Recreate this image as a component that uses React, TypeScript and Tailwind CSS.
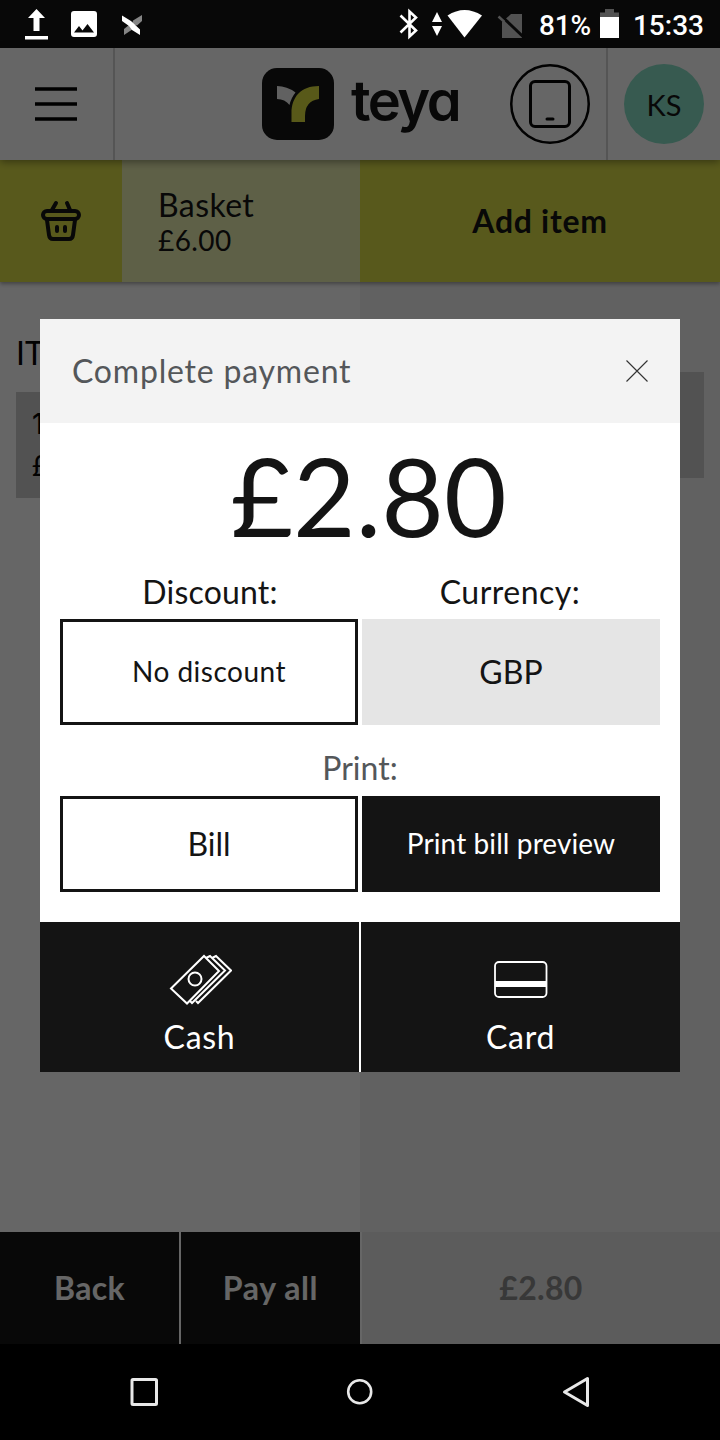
import type { ReactNode } from 'react'

function StatusBar() {
    return (
        <div className="flex h-12 items-center bg-[#080808] font-['Roboto',sans-serif] text-[28px] font-medium text-white">
            <svg className="h-12 w-[160px] shrink-0" viewBox="0 0 160 48" fill="#fff">
                <path d="M36.500 9l8.500 9h-5.500v13h-6V18H28zM25 36h23v3.500H25z" />
                <path fillRule="evenodd" d="M74 11h20a3 3 0 0 1 3 3v20a3 3 0 0 1-3 3H74a3 3 0 0 1-3-3V14a3 3 0 0 1 3-3zM74 32.500h20L87.500 24l-5 6.500-3.500-4.500z" />
                <path fill="#858585" d="M142 15v6l-5 4.500-5-1 1-4zM124 35v-6l5-4 4 1v3z" />
                <path d="M122 15.500l9 5.500 9 8.500v5.500l-8-5-3-4-7-5z" />
            </svg>
            <svg className="ml-auto h-12 w-[140px] shrink-0" viewBox="390 0 140 48" fill="none">
                <path d="M400.500 15.500l15.500 15-6.500 6v-25l6.500 6-15.500 15" stroke="#fff" strokeWidth="2.600" />
                <path d="M437 12l5 10h-10zM437 36l-5-10h10z" fill="#fff" />
                <path d="M447.500 15.500q17-11 34.500 0L464.500 37.500z" fill="#fff" />
                <path d="M511 14h11v24h-20V22z" fill="#525252" />
                <path d="M503 17.500l21 20" stroke="#080808" strokeWidth="3" />
                <path d="M498.500 16.500l6 5.500" stroke="#525252" strokeWidth="2.500" />
            </svg>
            <span className="ml-[9px] w-[53px] pt-1 whitespace-nowrap tracking-[-0.2px]">81%</span>
            <svg className="ml-[8px] h-12 w-[20px] shrink-0" viewBox="600 0 20 48">
                <path d="M605 9h9v3.500h5V18h-19v-5.500h5z" fill="#525252" />
                <path d="M600 17h19v21h-19z" fill="#fff" />
            </svg>
            <span className="mr-[16px] ml-[13px] pt-1 whitespace-nowrap">15:33</span>
        </div>
    )
}

function Header() {
    return (
        <header className="relative z-20 flex h-28 bg-white shadow-[0_2px_8px_rgba(0,0,0,0.4)]">
            <div className="flex w-[115px] items-center border-r-2 border-[#d4d4d4] pl-[35px]">
                <svg className="h-[34px] w-[42px]" viewBox="0 0 42 34">
                    <path d="M0 2h42M0 17h42M0 32h42" stroke="#000" strokeWidth="3.500" />
                </svg>
            </div>
            <div className="flex flex-1 items-center pl-[147px]">
                <svg className="h-[72px] w-[72px] shrink-0" viewBox="0 0 72 72">
                    <rect width="72" height="72" rx="15" fill="#141414" />
                    <path d="M15 18q10 0 18.500 6.500Q29 30 27.500 37 23 31 15 31z" fill="#f3f3f3" />
                    <path d="M57 18v13Q43 33 43 48v6H29.500V45C29.500 29 39 18 57 18z" fill="#dddf3f" />
                </svg>
                <span className="-mt-1.5 ml-[17px] font-['Inter',sans-serif] text-[56px] leading-none font-semibold tracking-[-2.5px] text-[#141414] [font-feature-settings:'cv11']">teya</span>
            </div>
            <div className="flex w-[98px] shrink-0 items-center border-r-2 border-[#d4d4d4]">
                <svg className="h-20 w-20" viewBox="0 0 80 80" fill="none" stroke="#050505">
                    <circle cx="40" cy="40" r="38.750" strokeWidth="2.500" />
                    <rect x="20.500" y="17.500" width="39" height="45" rx="4.500" strokeWidth="3" />
                    <path d="M37 55h6" strokeWidth="3" strokeLinecap="round" />
                </svg>
            </div>
            <div className="flex w-28 shrink-0 items-center justify-center">
                <div className="flex h-20 w-20 items-center justify-center rounded-full bg-[#8ae1c8] pt-0.5 text-[29px] text-[#141414]">KS</div>
            </div>
        </header>
    )
}

function BasketBar() {
    return (
        <div className="relative z-10 flex h-[122px] text-[#141414] shadow-[0_2px_4px_rgba(0,0,0,0.35)]">
            <div className="flex w-[122px] items-center justify-center bg-[#dddf48]">
                <svg className="h-[42px] w-[42px]" viewBox="0 0 42 42" fill="none" stroke="#141414" strokeWidth="4" strokeLinecap="round">
                    <rect x="3" y="11" width="36" height="8" rx="4" />
                    <path d="M7 20l2 15q.5 4 4 4h16q3.500 0 4-4l2-15M12 10l4-7M30 10l-3-7M17 27v4M25 27v4" />
                </svg>
            </div>
            <div className="flex w-[238px] flex-col justify-center bg-[#ebf0b2] pt-0.5 pl-9">
                <span className="text-[32px] leading-9 tracking-[0.4px]">Basket</span>
                <span className="text-[28px] leading-[34px] tracking-[0.4px]">£6.00</span>
            </div>
            <div className="flex flex-1 items-center justify-center bg-[#dddf48] text-[32px] font-bold tracking-[0.7px]">Add item</div>
        </div>
    )
}

function CashIcon() {
    return (
        <svg className="h-[52px] w-[64px]" viewBox="0 0 64 52" fill="none" stroke="#fff" strokeWidth="2">
            <path d="M3 35.500L36 3l15 15-32 32.500z" />
            <circle cx="27" cy="26" r="6.500" />
            <path d="M38 5l4-2 15 14.500L24 50l-2-2M44 5l4-2 15 14.500L30 50l-2-2" />
        </svg>
    )
}

function CardIcon() {
    return (
        <svg className="h-[52px] w-[54px]" viewBox="0 0 54 52" fill="none" stroke="#fff">
            <rect x="1" y="9" width="51.500" height="35" rx="4" strokeWidth="1.800" />
            <path d="M1 31h51.500" strokeWidth="6" />
        </svg>
    )
}

function PayButton({ label, children }: { label: string; children: ReactNode }) {
    return (
        <button className="flex flex-1 flex-col items-center bg-[#141414] pt-[31px] text-[32px] text-white">
            {children}
            <span className="mt-[12px] leading-10 tracking-[0.7px]">{label}</span>
        </button>
    )
}

function PaymentModal() {
    return (
        <div className="flex h-[753px] w-[640px] flex-col bg-white text-[#141414]">
            <div className="flex h-[104px] items-center justify-between bg-[#f3f3f3] px-8 text-[32px] text-[#54575a]">
                <span className="tracking-[0.8px]">Complete payment</span>
                <svg className="h-[22px] w-[22px]" viewBox="0 0 22 22" stroke="#333" strokeWidth="1.100">
                    <path d="M.5.5l21 21M21.500.5l-21 21" />
                </svg>
            </div>
            <div className="flex h-[150px] items-center justify-center pb-1.5 pl-[17px] text-[108px] leading-none">£2.80</div>
            <div className="grid grid-cols-2 gap-x-1 px-5 text-center text-[32px]">
                <span className="h-[46px] pl-0.5 leading-[38px] tracking-[0.2px]">Discount:</span>
                <span className="h-[46px] pr-0.5 leading-[38px] tracking-[0.5px]">Currency:</span>
                <button className="h-[106px] border-[3px] border-[#141414] pb-0.5 text-[28px] tracking-[0.5px]">No discount</button>
                <button className="h-[106px] bg-[#e5e5e5]">GBP</button>
            </div>
            <div className="mt-6 h-[47px] text-center text-[32px] leading-[38px] text-[#54575a]">Print:</div>
            <div className="grid grid-cols-2 gap-x-1 px-5 text-[32px]">
                <button className="h-24 border-[3px] border-[#141414]">Bill</button>
                <button className="h-24 bg-[#141414] pb-0.5 text-[28px] tracking-[0.1px] text-white">Print bill preview</button>
            </div>
            <div className="mt-auto flex h-[150px] gap-0.5">
                <PayButton label="Cash"><CashIcon /></PayButton>
                <PayButton label="Card"><CardIcon /></PayButton>
            </div>
        </div>
    )
}

function NavigationBar() {
    return (
        <nav className="flex h-24 items-center bg-black">
            <svg className="h-24 w-full" viewBox="0 0 720 96" fill="none" stroke="#e8e8e8" strokeWidth="3" strokeLinejoin="round">
                <rect x="132" y="35.500" width="24.500" height="25" rx="1" />
                <circle cx="359.700" cy="47.700" r="11.500" strokeWidth="2.600" />
                <path d="M564.500 48l23-13.500v27z" />
            </svg>
        </nav>
    )
}

export default function App() {
    return (
        <div className="h-[1440px] w-[720px] overflow-hidden bg-black font-['Lato',sans-serif]">
            <StatusBar />
            <div className="relative flex h-[1296px] flex-col">
                <Header />
                <BasketBar />
                <main className="flex h-[950px] text-[32px] text-[#050505]">
                    <section className="w-[360px] bg-white px-4 pt-[51px]">
                        <div className="h-[59px] leading-10">IT</div>
                        <div className="h-[106px] bg-[#cdcdcd] px-4 pt-3">
                            <div className="font-['Inter',sans-serif] text-[28px] leading-10 font-medium">1</div>
                            <div className="text-[28px] leading-[42px]">£</div>
                        </div>
                    </section>
                    <section className="w-[360px] bg-[#f3f3f3] px-4 pt-[90px]">
                        <div className="h-[106px] bg-[#cdcdcd]"></div>
                    </section>
                </main>
                <footer className="flex h-28 bg-white text-[32px] font-bold text-white">
                    <button className="mr-0.5 w-[179px] bg-[#141414] tracking-[0.3px]">Back</button>
                    <button className="w-[179px] bg-[#141414] tracking-[0.6px]">Pay all</button>
                    <div className="ml-0.5 flex flex-1 items-center justify-center bg-[#e6e6e6] tracking-[0.3px] text-[#8c8c8c]">£2.80</div>
                </footer>
                <div className="absolute inset-0 z-30 bg-black/60 px-10 pt-[271px]">
                    <PaymentModal />
                </div>
            </div>
            <NavigationBar />
        </div>
    )
}
